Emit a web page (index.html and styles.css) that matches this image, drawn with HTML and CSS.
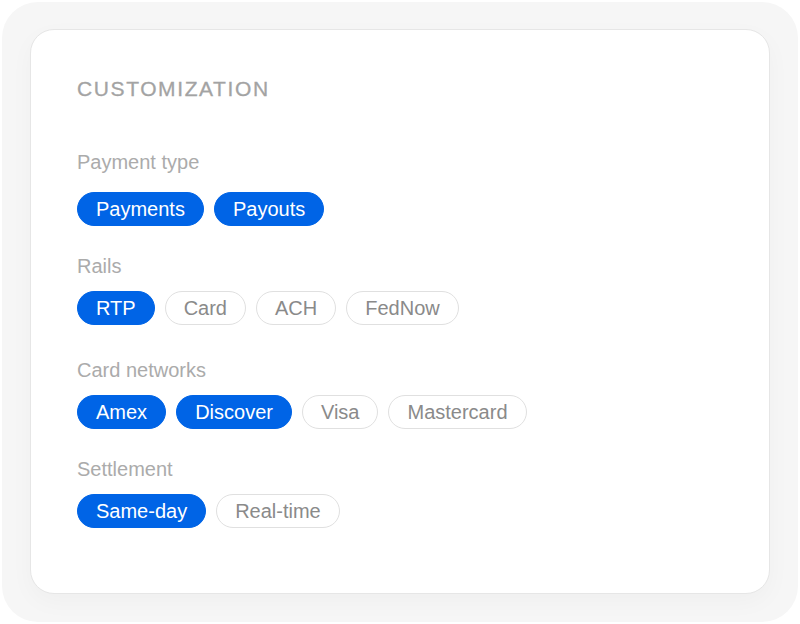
FILE: index.html
```html
<!DOCTYPE html>
<html lang="en">
<head>
  <meta charset="UTF-8">
  <title>Customization</title>
  <link rel="stylesheet" href="styles.css">
</head>
<body>
  <div class="frame">
    <div class="card">
      <h2 class="card-title">CUSTOMIZATION</h2>

      <div class="group group-first">
        <div class="group-label">Payment type</div>
        <div class="chips">
          <span class="chip active">Payments</span>
          <span class="chip active">Payouts</span>
        </div>
      </div>

      <div class="group">
        <div class="group-label">Rails</div>
        <div class="chips">
          <span class="chip active">RTP</span>
          <span class="chip">Card</span>
          <span class="chip">ACH</span>
          <span class="chip">FedNow</span>
        </div>
      </div>

      <div class="group group-wide">
        <div class="group-label">Card networks</div>
        <div class="chips">
          <span class="chip active">Amex</span>
          <span class="chip active">Discover</span>
          <span class="chip">Visa</span>
          <span class="chip">Mastercard</span>
        </div>
      </div>

      <div class="group">
        <div class="group-label">Settlement</div>
        <div class="chips">
          <span class="chip active">Same-day</span>
          <span class="chip">Real-time</span>
        </div>
      </div>
    </div>
  </div>
</body>
</html>
```

FILE: styles.css
```css
* {
  box-sizing: border-box;
}

body {
  margin: 0;
  background: #fff;
  font-family: 'Liberation Sans', Arial, sans-serif;
}

.frame {
  margin: 2px;
  width: 796px;
  height: 620px;
  padding: 27px 28px 28px;
  background: #f6f6f6;
  border-radius: 36px;
}

.card {
  height: 100%;
  background: #fff;
  border: 1px solid #e6e6e6;
  border-radius: 24px;
  padding: 47px 46px;
  box-shadow: 0 8px 24px rgba(0, 0, 0, 0.03);
}

.card-title {
  margin: 0;
  font-size: 21px;
  line-height: 24px;
  font-weight: normal;
  letter-spacing: 1.6px;
  color: #a3a3a3;
  -webkit-text-stroke: 0.3px #a3a3a3;
}

.group {
  margin-top: 28px;
}

.group-first {
  margin-top: 49px;
}

.group-wide {
  margin-top: 33px;
}

.group-label {
  font-size: 20px;
  line-height: 24px;
  color: #ababab;
  margin-bottom: 13px;
}

.group-first .group-label {
  margin-bottom: 18px;
}

.chips {
  display: flex;
  gap: 10px;
}

.chip {
  height: 34px;
  padding: 0 18px;
  display: flex;
  align-items: center;
  border: 1px solid #e0e0e0;
  border-radius: 17px;
  font-size: 20px;
  color: #8a8a8a;
}

.chip.active {
  background: #0064e6;
  border-color: #0064e6;
  color: #fff;
}
```
